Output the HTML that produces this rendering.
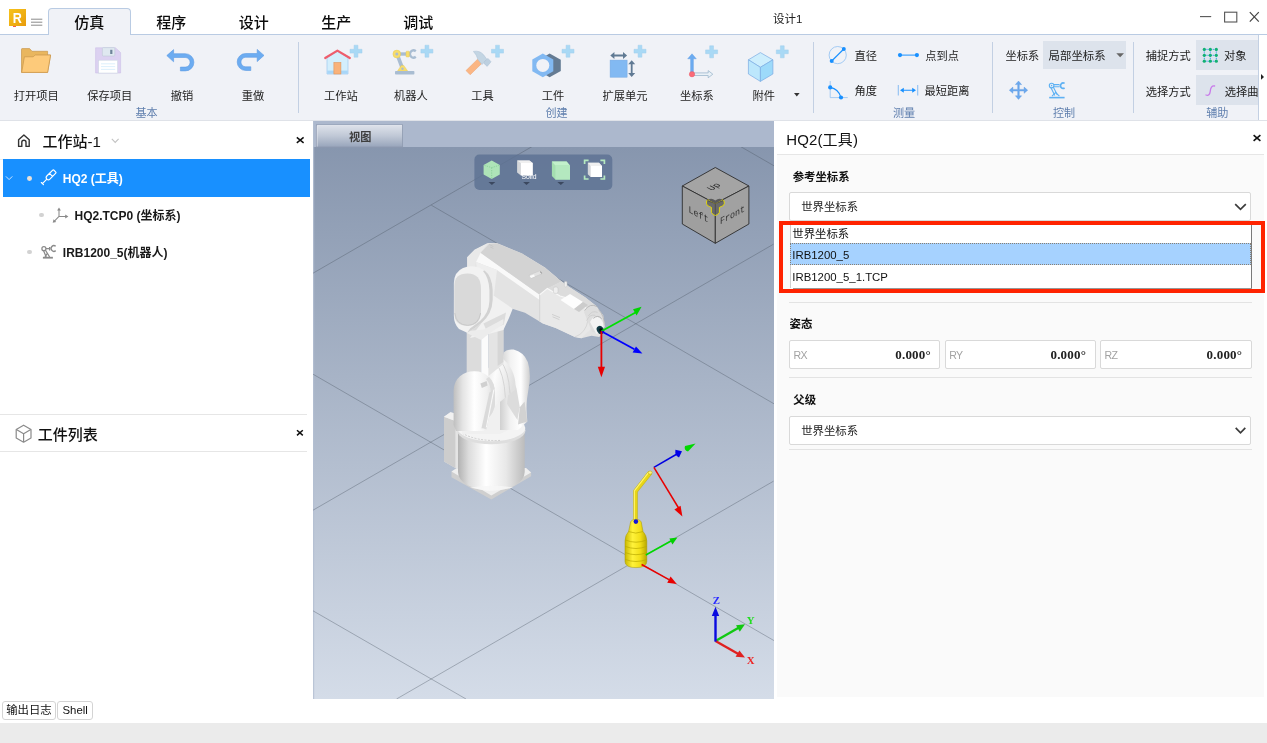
<!DOCTYPE html>
<html lang="zh-CN">
<head>
<meta charset="utf-8">
<title>设计1</title>
<style>
*{box-sizing:border-box;margin:0;padding:0}
html,body{width:1267px;height:743px;overflow:hidden;background:#fff}
body{font-family:"Liberation Sans","Noto Sans CJK SC",sans-serif;color:#222;position:relative;font-size:11.25px}
.abs{position:absolute}
svg{position:absolute;overflow:visible}
/* title + tabs */
#titlebar{position:absolute;left:0;top:0;width:1267px;height:34px;background:#fff}
#tabline{position:absolute;left:0;top:34px;width:1267px;height:1px;background:#b9cbe3}
.tab{position:absolute;top:8px;height:27px;width:82.5px;text-align:center;font-size:15px;line-height:30px;color:#0c0c0c;font-weight:500}
.tab.on{background:#f0f2f7;border:1px solid #b9cbe3;border-bottom:none;border-radius:4px 4px 0 0;line-height:28px}
#wtitle{position:absolute;left:773px;top:12px;font-size:11.5px;line-height:14px;color:#222}
/* ribbon */
#ribbon{position:absolute;left:0;top:35px;width:1258.5px;height:85px;background:#f0f2f7}
#ribline{position:absolute;left:0;top:120px;width:1267px;height:1px;background:#dfe2e8}
.sep{position:absolute;top:42px;width:1px;height:71px;background:#c3d0e3}
.blab{position:absolute;top:88px;height:16px;line-height:16px;font-size:11.25px;color:#222;white-space:nowrap;transform:translateX(-50%)}
.glab{position:absolute;top:105px;height:16px;line-height:16px;font-size:11.1px;color:#5f7fae;white-space:nowrap;transform:translateX(-50%)}
.stxt{position:absolute;height:16px;line-height:16px;font-size:11.25px;color:#222;white-space:nowrap}
.sbox{position:absolute;background:#dde3ec}
/* left */
#left{position:absolute;left:0;top:121px;width:310px;height:579px;background:#fff}
.row{position:absolute;left:3px;width:307px;height:37.6px}
.row.sel{background:#1890ff}
.rtxt{position:absolute;font-weight:bold;font-size:12px;line-height:16px;white-space:nowrap;color:#1a1a1a}
.dot{position:absolute;width:4.6px;height:4.6px;border-radius:50%;background:#d2d2d2}
.hl{position:absolute;height:1px;background:#e6e6e6}
/* right */
#right{position:absolute;left:777px;top:121px;width:487px;height:576px;background:#fafafa}
#rhead{position:absolute;left:0;top:0;width:487px;height:34px;background:#fff;border-bottom:1px solid #e6e6e6}
.slab{position:absolute;font-weight:bold;font-size:11.4px;line-height:16px;color:#111;white-space:nowrap}
.selbox{position:absolute;left:12.4px;width:462px;height:28.5px;background:#fff;border:1px solid #d9d9d9;border-radius:2px}
.selbox span{position:absolute;left:10.8px;top:6px;font-size:11.4px;line-height:16px;color:#222}
.nbox{position:absolute;top:219.2px;height:28.7px;width:151px;background:#fff;border:1px solid #d9d9d9;border-radius:2px}
.nbox i{position:absolute;left:3.2px;top:6px;font-style:normal;font-size:10.6px;line-height:16px;color:#a2a2a2;font-weight:normal;letter-spacing:-0.7px}
.nbox b{position:absolute;right:8.5px;top:5.5px;font-family:"Liberation Serif","DejaVu Serif",serif;font-size:13px;line-height:16px;color:#222;font-weight:bold;letter-spacing:0.2px}
.rsep{position:absolute;left:12px;width:463px;height:1px;background:#e3e3e3}
/* bottom */
.bbtn{position:absolute;top:700.9px;height:19px;border:1px solid #d4d4d4;border-radius:3px;background:#fff;font-size:11.4px;line-height:17px;text-align:center;color:#111}
#status{position:absolute;left:0;top:723px;width:1267px;height:20px;background:#ebebeb}
</style>
</head>
<body>
<div id="app" style="position:absolute;left:0;top:0;width:1267px;height:743px;will-change:transform;background:transparent">
<!-- TITLE / TABS -->
<div id="titlebar"></div>
<div id="tabline"></div>
<div id="ribbon"></div>
<div id="ribline"></div>
<div class="tab on" style="left:48px">仿真</div>
<div class="tab" style="left:130px">程序</div>
<div class="tab" style="left:212.5px">设计</div>
<div class="tab" style="left:295px">生产</div>
<div class="tab" style="left:377px">调试</div>
<div id="wtitle">设计1</div>
<div class="abs" style="left:9px;top:9px;width:17px;height:16.5px;background:linear-gradient(135deg,#f6c21c 0%,#efae12 60%,#e79a0c 100%);color:#fff;font-weight:bold;font-size:15px;line-height:17.4px;text-align:center;font-family:'Liberation Sans',sans-serif"><span style="display:inline-block;transform:scaleX(0.84)">R</span></div>
<div class="abs" style="left:13px;top:25.5px;width:3px;height:1.2px;background:#f05a5a"></div>
<svg style="left:30px;top:17px" width="14" height="10" viewBox="0 0 14 10"><path d="M1 2.2H12.3M1 5.2H12.3M1 8.2H12.3" stroke="#8a8a8a" stroke-width="1" fill="none"/></svg>
<svg style="left:1195px;top:8px" width="70" height="18" viewBox="0 0 70 18"><path d="M5 8.6H16.2" stroke="#555" stroke-width="1.1" fill="none"/><rect x="29.6" y="4.2" width="12.2" height="9.8" fill="none" stroke="#555" stroke-width="1.1"/><path d="M54.8 4.2L63.8 13.6M63.8 4.2L54.8 13.6" stroke="#444" stroke-width="1.2" fill="none"/></svg>
<div class="sep" style="left:298px"></div><div class="sep" style="left:813px"></div><div class="sep" style="left:992px"></div><div class="sep" style="left:1133px"></div>
<div class="abs" style="left:1258px;top:35px;width:1px;height:85px;background:#c3d0e3"></div>
<div class="sbox" style="left:1043.3px;top:41px;width:82.4px;height:27.7px"></div>
<div class="sbox" style="left:1195.7px;top:40.2px;width:62.6px;height:30.2px"></div>
<div class="sbox" style="left:1195.7px;top:75px;width:62.6px;height:30.4px"></div>
<div class="blab" style="left:36.2px">打开项目</div><div class="blab" style="left:109.7px">保存项目</div><div class="blab" style="left:182px">撤销</div><div class="blab" style="left:253.1px">重做</div>
<div class="blab" style="left:340.9px">工作站</div><div class="blab" style="left:411px">机器人</div><div class="blab" style="left:482.4px">工具</div><div class="blab" style="left:553px">工件</div><div class="blab" style="left:625px">扩展单元</div><div class="blab" style="left:697px">坐标系</div><div class="blab" style="left:763.8px">附件</div>
<div class="glab" style="left:146.5px">基本</div><div class="glab" style="left:556.6px">创建</div><div class="glab" style="left:904px">测量</div><div class="glab" style="left:1064px">控制</div><div class="glab" style="left:1217.3px">辅助</div>
<div class="stxt" style="left:854.5px;top:48.2px">直径</div><div class="stxt" style="left:925.2px;top:48.2px">点到点</div>
<div class="stxt" style="left:854.5px;top:82.8px">角度</div><div class="stxt" style="left:924.4px;top:82.8px">最短距离</div>
<div class="stxt" style="left:1005.5px;top:47.7px">坐标系</div><div class="stxt" style="left:1048.6px;top:47.7px;font-size:11.4px">局部坐标系</div>
<div class="stxt" style="left:1145.8px;top:48.2px">捕捉方式</div><div class="stxt" style="left:1223.9px;top:48.2px">对象</div>
<div class="stxt" style="left:1145.8px;top:84.1px">选择方式</div><div class="stxt" style="left:1224.8px;top:84.1px;width:33.5px;overflow:hidden">选择曲</div>
<svg style="left:0;top:0" width="1267" height="121" viewBox="0 0 1267 121">
<defs>
<g id="plus"><path d="M-1.9 -6H1.9V-1.9H6V1.9H1.9V6H-1.9V1.9H-6V-1.9H-1.9Z" fill="#a9d9f5" stroke="#a0cfec" stroke-width="0.5" stroke-linejoin="round"/></g>
</defs>
<!-- folder -->
<path d="M21.5 49.2Q21.5 48.6 22.1 48.6H29.6L32 51.3H47.6V55H50.6L47.6 72.4H21.5Z" fill="#e9b65e" stroke="#c9974c" stroke-width="0.7" stroke-linejoin="round"/>
<path d="M24.4 56.8H33.2L35.2 55H50.6L47.6 72.4H21.7Z" fill="#fdca7a" stroke="#c9974c" stroke-width="0.7" stroke-linejoin="round"/>
<!-- floppy -->
<path d="M95.6 47.8H115.4L120.6 52.6V73H95.6Z" fill="#dcd1f1" stroke="#cdbfe6" stroke-width="0.6" stroke-linejoin="round"/>
<rect x="102.4" y="47.6" width="12.4" height="8.4" rx="0.8" fill="#dfe8f0" stroke="#b9c6d3" stroke-width="0.5"/>
<rect x="110.2" y="49.8" width="2.2" height="4.2" fill="#6f8499"/>
<rect x="98.6" y="60.2" width="19" height="12.8" fill="#ffffff" stroke="#c8d4e0" stroke-width="0.5"/>
<path d="M101 63.8H115.2M101 66.6H115.2M101 69.4H115.2" stroke="#d3ebfa" stroke-width="0.8"/>
<!-- undo -->
<path d="M166.8 55.6L173.6 49.6V53.7H185.3A8.4 8.4 0 0 1 185.3 70.9H180.4V67.1H185.3A4.6 4.6 0 0 0 185.3 57.5H173.6V61.8Z" fill="#6cacf1" stroke="#5c9be3" stroke-width="0.6" stroke-linejoin="round"/>
<!-- redo -->
<path d="M264 55.4L257.2 49.4V53.5H245.7A8.4 8.4 0 0 0 245.7 70.5H250.8V66.8H245.7A4.6 4.6 0 0 1 245.7 57.3H257.2V61.6Z" fill="#6cacf1" stroke="#5c9be3" stroke-width="0.6" stroke-linejoin="round"/>
<!-- station (house) -->
<path d="M327 57.5L337.4 51.5L348 57.5V74H327Z" fill="#d3eefc" stroke="#9fc8ee" stroke-width="0.7"/>
<rect x="327.2" y="70.6" width="20.6" height="3.2" fill="#a8d6f8"/>
<rect x="333.9" y="62.6" width="7" height="11.4" fill="#f9b27a" stroke="#e09459" stroke-width="0.6"/>
<path d="M325.2 58L337.4 50.6L349.8 58" fill="none" stroke="#ee5d6c" stroke-width="2.2" stroke-linejoin="round" stroke-linecap="round"/>
<use href="#plus" x="356" y="51.2"/>
<!-- robot -->
<path d="M397 54L402.3 68" stroke="#a9bdd2" stroke-width="3.6" fill="none"/>
<path d="M397 54H408" stroke="#a9bdd2" stroke-width="3.4" fill="none"/>
<path d="M415.8 51.2A3.6 3.6 0 1 0 415.8 56.8" fill="none" stroke="#a9bdd2" stroke-width="2.4"/>
<rect x="406" y="51.2" width="3.4" height="5.8" rx="0.8" fill="#f7dd6b" stroke="#e3c454" stroke-width="0.4"/>
<circle cx="396.8" cy="54" r="3.9" fill="#f7dd6b" stroke="#e3c454" stroke-width="0.4"/>
<circle cx="396.8" cy="54" r="1.5" fill="#a9bdd2"/>
<path d="M397.4 71.2L401.2 65.4H403.8L407.8 71.2Z" fill="#f7dd6b" stroke="#e3c454" stroke-width="0.4"/>
<circle cx="402.5" cy="68.8" r="1.2" fill="#a9bdd2"/>
<rect x="395" y="71" width="19.4" height="3.6" rx="0.8" fill="#a9bdd2"/>
<use href="#plus" x="426.9" y="51.2"/>
<!-- hammer -->
<path d="M466 70.6L477.6 59.2L481.8 63.4L470.2 74.8Z" fill="#fbb684" stroke="#eaa06c" stroke-width="0.5" stroke-linejoin="round"/>
<path d="M473.4 51.4Q479.6 50.2 483.4 54.6L487 59.4L482 64.6L478 59.6Q476.6 54.6 473.4 51.4Z" fill="#c3d5e3" stroke="#a9bfd2" stroke-width="0.5" stroke-linejoin="round"/>
<path d="M484.6 61.4L488 58.4L491 61.8L487.2 66.4L484 63.4Z" fill="#bdd0e0" stroke="#a9bfd2" stroke-width="0.5" stroke-linejoin="round"/>
<use href="#plus" x="497.5" y="51.2"/>
<!-- workpiece nut -->
<path d="M549.6 53.5L560.8 59.7V71.1L549.6 77.3L539 71.1V59.7Z" fill="#647b93"/>
<path d="M542.8 53.4L553.3 59.5V71.2L542.8 77.3L532.3 71.2V59.5Z" fill="#82b9f2"/>
<circle cx="542.8" cy="65.4" r="6.5" fill="#f0f2f7"/>
<use href="#plus" x="568" y="51.2"/>
<!-- extension unit -->
<rect x="610.1" y="60.1" width="17" height="17.1" fill="#82b9f2" stroke="#74a9e2" stroke-width="0.5"/>
<path d="M610.3 55.5L614.4 51.9V54.6H623V51.9L627.1 55.5L623 59.1V56.4H614.4V59.1Z" fill="#607a94"/>
<path d="M631.7 60.2L635.2 64.2H632.6V73H635.2L631.7 77.1L628.2 73H630.8V64.2H628.2Z" fill="#607a94"/>
<use href="#plus" x="640" y="51.2"/>
<!-- coordinate -->
<path d="M694 72.9H708.2V70.6L712.8 74.2L708.2 77.8V75.5H694Z" fill="#e9f1f7" stroke="#9db8cd" stroke-width="0.8" stroke-linejoin="round"/>
<path d="M692 53.8L696.3 58.8H693.4V73.5H690.6V58.8H687.7Z" fill="#6cacf1" stroke="#5c9be3" stroke-width="0.4" stroke-linejoin="round"/>
<circle cx="692" cy="74.2" r="2.7" fill="#fb6b78" stroke="#e85563" stroke-width="0.4"/>
<use href="#plus" x="711.6" y="51.8"/>
<!-- attachment cube -->
<path d="M760.4 52.6L772.9 59.8L760.4 67.3L748.4 59.8Z" fill="#cdeefd" stroke="#7baae2" stroke-width="0.7" stroke-linejoin="round"/>
<path d="M748.4 59.8L760.4 67.3V81.4L748.4 74Z" fill="#bce7fc" stroke="#7baae2" stroke-width="0.7" stroke-linejoin="round"/>
<path d="M772.9 59.8L760.4 67.3V81.4L772.9 74Z" fill="#9ddafa" stroke="#7baae2" stroke-width="0.7" stroke-linejoin="round"/>
<use href="#plus" x="782.3" y="51.8"/>
<path d="M794 93H799.6L796.8 96.4Z" fill="#333"/>
<!-- measure icons -->
<circle cx="837.7" cy="55.1" r="8.6" fill="none" stroke="#8fc0f3" stroke-width="0.8"/>
<path d="M831.7 61L843.8 49" stroke="#1890ff" stroke-width="1.1"/>
<circle cx="843.8" cy="49" r="2" fill="#1890ff"/><circle cx="831.7" cy="61" r="2" fill="#1890ff"/>
<path d="M830.2 81V97.6H847.7" fill="none" stroke="#8fc0f3" stroke-width="0.8"/>
<path d="M830.2 87.4Q838.6 89 841 97.5" fill="none" stroke="#1890ff" stroke-width="1.1"/>
<circle cx="830.2" cy="87.4" r="2.1" fill="#1890ff"/><circle cx="841" cy="97.5" r="2.1" fill="#1890ff"/>
<path d="M900 55.1H917" stroke="#1890ff" stroke-width="1"/>
<circle cx="900" cy="55.1" r="2.1" fill="#1890ff"/><circle cx="916.9" cy="55.1" r="2.1" fill="#1890ff"/>
<path d="M898.3 85V95.6M917.7 85V95.6" stroke="#8fc0f3" stroke-width="1.1"/>
<path d="M900 90.3L903.8 87.8V89.8H912.2V87.8L916 90.3L912.2 92.8V90.8H903.8V92.8Z" fill="#1890ff"/>
<!-- move icon -->
<path d="M1018.5 81L1021.6 84.6H1019.3V89.4H1024.1V87.1L1027.7 90.2L1024.1 93.3V91H1019.3V95.8H1021.6L1018.5 99.4L1015.4 95.8H1017.7V91H1012.9V93.3L1009.3 90.2L1012.9 87.1V89.4H1017.7V84.6H1015.4Z" fill="#6aa8ee" stroke="#5a98e0" stroke-width="0.4" stroke-linejoin="round"/>
<!-- small robot -->
<g fill="none" stroke="#5eb1f3" stroke-width="1.1">
<circle cx="1051.6" cy="85.6" r="2.3"/>
<path d="M1053.9 84.6H1059.5M1053.9 86.8H1059.5"/>
<path d="M1064.6 83.4A2.7 2.7 0 1 0 1064.6 88" stroke-width="1.7"/>
<path d="M1051 87.8L1054.8 95.6M1053.4 87.2L1057.4 95"/>
<path d="M1052 96.2L1055.6 92.6L1059.4 96.2"/>
<path d="M1049.2 97.6H1064.6" stroke-width="1.6"/>
</g>
<circle cx="1051.6" cy="85.6" r="0.8" fill="#5eb1f3"/>
<!-- dropdown triangle -->
<path d="M1116.3 53.2H1124L1120.15 57.3Z" fill="#666"/>
<!-- grid dots icon -->
<g stroke="#2f9cf2" stroke-width="1" stroke-dasharray="1.2 0.9" fill="none"><path d="M1204.3 49.4H1216.3M1204.3 55.3H1216.3M1204.3 61.2H1216.3M1204.3 49.4V61.2M1210.3 49.4V61.2M1216.3 49.4V61.2"/></g>
<g fill="#12b173"><circle cx="1204.3" cy="49.4" r="1.6"/><circle cx="1210.3" cy="49.4" r="1.6"/><circle cx="1216.3" cy="49.4" r="1.6"/><circle cx="1204.3" cy="55.3" r="1.6"/><circle cx="1210.3" cy="55.3" r="1.6"/><circle cx="1216.3" cy="55.3" r="1.6"/><circle cx="1204.3" cy="61.2" r="1.6"/><circle cx="1210.3" cy="61.2" r="1.6"/><circle cx="1216.3" cy="61.2" r="1.6"/></g>
<!-- S curve -->
<path d="M1206 95Q1209.6 96.4 1210.2 91.6Q1210.6 85.4 1214.6 86" fill="none" stroke="#c97aea" stroke-width="1.3" stroke-linecap="round"/>
<!-- scroll arrow -->
<path d="M1261 74L1264 76.9L1261 79.8Z" fill="#222"/>
</svg>

<div id="left">
<div class="abs" style="left:42.6px;top:10px;font-size:15px;line-height:21px;color:#111;white-space:nowrap;font-weight:500">工作站-1</div>
<div class="hl" style="left:0;top:38px;width:310px;background:#ededed"></div>
<div class="row sel" style="top:38.4px"></div>
<div class="rtxt" style="left:62.8px;top:49.5px;color:#fff">HQ2 (工具)</div>
<div class="dot" style="left:27.4px;top:54.8px;width:4.8px;height:4.8px;background:#e9e0d8"></div>
<div class="rtxt" style="left:74.5px;top:86.8px">HQ2.TCP0 (坐标系)</div>
<div class="dot" style="left:39.1px;top:91.6px"></div>
<div class="rtxt" style="left:62.8px;top:124px">IRB1200_5(机器人)</div>
<div class="dot" style="left:27.4px;top:128.8px"></div>
<div class="hl" style="left:0;top:293.4px;width:307.3px"></div>
<div class="hl" style="left:0;top:330.3px;width:307.3px"></div>
<div class="abs" style="left:37.8px;top:302.6px;font-size:15px;line-height:21px;color:#111;white-space:nowrap;font-weight:500">工件列表</div>
<svg style="left:0;top:0" width="310" height="579" viewBox="0 121 310 579">
<!-- home -->
<path d="M18.6 139.8L23.9 135L29.2 139.8V146.4H26V142.2Q26 140.2 23.9 140.2Q21.8 140.2 21.8 142.2V146.4H18.6Z" fill="none" stroke="#333" stroke-width="1.4" stroke-linejoin="round"/>
<path d="M111.8 138.9L115.2 142.4L118.6 138.9" fill="none" stroke="#c2c2c2" stroke-width="1.1"/>
<path d="M296.8 137.4L303.6 142.8M303.6 137.4L296.8 142.8" stroke="#111" stroke-width="1.5"/>
<!-- row1 chevron + tool icon -->
<path d="M5.9 176.4L9.1 179.6L12.3 176.4" fill="none" stroke="#cfe6ff" stroke-width="1"/>
<g fill="none" stroke="#fff" stroke-width="1.15" stroke-linecap="round" stroke-linejoin="round" transform="translate(50.75 175.1) rotate(-45.4)">
<path d="M-3.4 -2.15H5Q5.7 -2.15 5.7 -1.5V1.5Q5.7 2.15 5 2.15H-3.4A2.15 2.15 0 0 1 -3.4 -2.15ZM0.4 -2.15V2.15M-5.55 0H-11.9M-11.9 -1.5V1.5"/>
</g>
<!-- row2 axis icon -->
<g fill="none" stroke="#8a8a8a" stroke-width="1.05">
<path d="M59 209.4V216.4H66.4M59 216.4L54.2 221.3"/>
</g>
<path d="M59 207.4L60.9 210.6H57.1ZM68.4 216.5L65.2 218.4V214.6ZM52.7 222.8L53.6 219.3L56.2 221.9Z" fill="#8a8a8a"/>
<!-- row3 robot icon -->
<g fill="none" stroke="#8a8a8a" stroke-width="1.25">
<circle cx="43.9" cy="248.7" r="2"/>
<path d="M46 248.7H49.4M49.6 247V250.4"/>
<path d="M55.7 246.3A2.8 2.8 0 1 0 55.7 250.6" stroke-width="1.4"/>
<path d="M43.6 250.8L46.2 257M45.5 250.2L49.6 257"/>
<path d="M45 256.8L47.2 253.6"/>
<path d="M42.9 257.7H52.9" stroke-width="1.8"/>
</g>
<!-- cube icon -->
<g fill="none" stroke="#8a8a8a" stroke-width="1.2" stroke-linejoin="round">
<path d="M23.6 425.2L31 429.4V438L23.6 442.2L16.2 438V429.4Z"/>
<path d="M16.4 429.6L23.6 433.7L30.8 429.6M23.6 433.7V442"/>
</g>
<path d="M297 430.2L302.8 435.4M302.8 430.2L297 435.4" stroke="#111" stroke-width="1.5"/>
</svg>
</div>
<div class="abs" style="left:313px;top:121px;width:461px;height:578px;background:#acb8cd"></div>
<svg style="left:313px;top:121px" width="461" height="578" viewBox="313 121 461 578">
<defs>
<linearGradient id="bg" x1="0" y1="0" x2="0" y2="1"><stop offset="0" stop-color="#8796ae"/><stop offset="1" stop-color="#d4dce8"/></linearGradient>
<linearGradient id="tabg" x1="0" y1="0" x2="0" y2="1"><stop offset="0" stop-color="#dfe3eb"/><stop offset="0.5" stop-color="#c0c8d6"/><stop offset="1" stop-color="#98a5bb"/></linearGradient>
<linearGradient id="cyl" x1="0" y1="0" x2="1" y2="0"><stop offset="0" stop-color="#b2b2b2"/><stop offset="0.16" stop-color="#dcdcdc"/><stop offset="0.42" stop-color="#ffffff"/><stop offset="0.72" stop-color="#e8e8e8"/><stop offset="1" stop-color="#bcbcbc"/></linearGradient>
<linearGradient id="lobeR" x1="0" y1="0" x2="1" y2="0"><stop offset="0" stop-color="#d0d0d0"/><stop offset="0.35" stop-color="#f2f2f2"/><stop offset="0.7" stop-color="#ffffff"/><stop offset="1" stop-color="#cfcfcf"/></linearGradient>
<linearGradient id="lobeL" x1="0" y1="0" x2="1" y2="0"><stop offset="0" stop-color="#bfbfbf"/><stop offset="0.22" stop-color="#e4e4e4"/><stop offset="0.5" stop-color="#ffffff"/><stop offset="0.8" stop-color="#f0f0f0"/><stop offset="1" stop-color="#dcdcdc"/></linearGradient>
<linearGradient id="midc" x1="0" y1="0" x2="1" y2="0.3"><stop offset="0" stop-color="#e2e2e2"/><stop offset="0.4" stop-color="#fcfcfc"/><stop offset="1" stop-color="#e0e0e0"/></linearGradient>
<linearGradient id="lobe" x1="0" y1="0" x2="1" y2="0"><stop offset="0" stop-color="#cfcfcf"/><stop offset="0.3" stop-color="#f4f4f4"/><stop offset="0.7" stop-color="#ffffff"/><stop offset="1" stop-color="#dcdcdc"/></linearGradient>
<linearGradient id="arm" x1="0" y1="0" x2="0.5" y2="1"><stop offset="0" stop-color="#dedede"/><stop offset="0.45" stop-color="#f7f7f7"/><stop offset="1" stop-color="#e6e6e6"/></linearGradient>
<linearGradient id="ycyl" x1="0" y1="0" x2="1" y2="0"><stop offset="0" stop-color="#c9b800"/><stop offset="0.35" stop-color="#fff23a"/><stop offset="0.7" stop-color="#f2df18"/><stop offset="1" stop-color="#b8a800"/></linearGradient>
<clipPath id="vpclip"><rect x="313" y="147" width="461" height="552"/></clipPath>
</defs>
<rect x="313" y="147" width="461" height="552" fill="url(#bg)"/>
<rect x="313" y="121" width="1.2" height="578" fill="#b4bfd2" opacity="0.8"/>
<!-- header tab -->
<rect x="316.5" y="124.8" width="86.1" height="22.2" fill="url(#tabg)" stroke="#8e9ab0" stroke-width="0.8"/>
<path d="M317.2 146.6V125.5H402" fill="none" stroke="#eef1f6" stroke-width="0.7" opacity="0.8"/>
<text x="360.3" y="140.6" text-anchor="middle" font-size="11.2" font-weight="bold" fill="#3e3e3e" font-family="'Liberation Sans','Noto Sans CJK SC',sans-serif">视图</text>
<!-- grid -->
<g clip-path="url(#vpclip)" stroke="#4a5463" stroke-opacity="0.5" stroke-width="0.75" fill="none">
<path d="M313 273.2L532 146.6"/>
<path d="M313 510.2L773.5 244.2"/>
<path d="M396.5 699L773.5 481.2"/>
<path d="M741 146.8L774 165.8"/>
<path d="M431.3 205.2L774 403.8"/>
<path d="M313 374.2L774 640.6"/>
<path d="M313 610.8L466 699"/>
</g>
<g id="robot" stroke-linejoin="round">
<!-- base plate -->
<path d="M451.5 471.4L457 468H526L531.1 472.4V476.2L491.3 499.4L451.5 477.2Z" fill="#cfcfcf"/>
<path d="M451.5 471.6L491.3 495.4L531.1 472.6L526 468H457Z" fill="#efefef"/>
<!-- back box -->
<path d="M444 416.8L450.4 412.2L461 415V470L455.4 468L444 461.6Z" fill="#e4e4e4"/>
<path d="M444 416.8L455.4 421V468L444 461.6Z" fill="#cdcdcd"/>
<path d="M444 416.8L450.4 412.2L461 415L455.4 421Z" fill="#f1f1f1"/>
<!-- base cylinder -->
<path d="M458 431V472A33.35 18.7 0 0 0 524.7 472V431Z" fill="url(#cyl)"/>
<path d="M470 487.6Q491.3 493.4 513 487.4Q491.3 484 470 487.6Z" fill="#f6f6f6" opacity="0.8"/>
<!-- top flange -->
<ellipse cx="491.3" cy="430.6" rx="34.2" ry="13.6" fill="#dedede"/>
<ellipse cx="491.3" cy="428" rx="34" ry="13.2" fill="#f4f4f4"/>
<path d="M462 433Q476 441.4 500 440.4" fill="none" stroke="#c9c9c9" stroke-width="0.9" stroke-dasharray="2 1.4"/>
<!-- fill behind lobes -->
<path d="M462 400L500 372L522 380L527 421L500 434H462Z" fill="#f0f0f0"/>
<!-- right lobe -->
<path d="M503.6 352.6Q507 348.8 513.6 349.6Q523.6 352 527.8 362Q530.6 370 529.6 382L527 399Q526 410 527.4 421.4L518 430H500V372Z" fill="url(#lobeR)"/>
<path d="M510 371L516.4 388L519.8 407.2L517.4 420L507 404Z" fill="#dcdcdc"/>
<path d="M519.8 407.2L524.6 401.4L527.2 421.4L518 424.6Z" fill="#d2d2d2"/>
<!-- middle cylinder -->
<path d="M485 370L503 359Q512 366.4 514.6 378Q516 384 515.4 389.5L494.9 406Z" fill="url(#midc)"/>
<path d="M496 363.4Q504 373 505.4 397.6M500.4 360.8Q508.6 370 510 393.6" fill="none" stroke="#d2d2d2" stroke-width="0.9"/>
<!-- vertical link -->
<path d="M466.7 322V378L481.2 382V322Z" fill="#dcdcdc"/>
<path d="M481.2 322V380L488.5 378V322Z" fill="#fbfbfb"/>
<path d="M488.5 322V376L503.4 364V318L497 320Z" fill="#e4e4e4"/>
<path d="M497.6 322V366L503.4 362V318Z" fill="#d6d6d6"/>
<!-- left lobe -->
<path d="M453.6 390Q454.2 381 460 376.2Q466 371.2 474 371.2Q483 371 489 377Q494.6 382.6 494.8 392L495 404Q494 412 488.5 418L484 431H456L453.6 425Z" fill="url(#lobeL)"/>
<path d="M486 379Q490.6 384 491 393V404Q490 411 486 416L482 428L486.4 429.6L488.5 418Q494 412 495 404L494.8 392Q494.6 382.6 489 377Z" fill="#dddddd"/>
<path d="M480.4 383.6L486.6 381L487.6 385.4L481.8 388Z" fill="#d0d0d0"/>
<!-- strut -->
<path d="M489.4 392.6L494.6 389L487 427L481.4 428.6Z" fill="#dadada"/>
<path d="M493.2 390L494.6 389L487 427L485.8 427.4Z" fill="#f8f8f8"/>
<!-- bracket under forearm -->
<path d="M482 322.4L490 292L513.4 307L509 318L503.4 330L488.5 334L470 338Z" fill="#f1f1f1"/>
<path d="M483.4 323.4L506 312.6L503.9 324.5L486.6 330.6Z" fill="#dcdcdc"/>
<path d="M466.7 333L481.2 340L488.5 334L503.4 324V319L484 329.4L468 331Z" fill="#ececec"/>
<!-- forearm silhouette (side face) -->
<path d="M467.2 257.2L474.6 249.8L488 243.1H496.9L522 253.5L545 267.6L561.4 281.3L568.5 286.4L585.1 297.3L596.6 306.3L603 315.2L604.9 325.4L602.6 333L599.2 337L591.5 335.7L581.3 338.2L574.9 337L555.7 328L542.9 323.5L525 312.7L513.1 309L493.9 295.7L489 290L467.2 268Z" fill="#e3e3e3"/>
<!-- shoulder block left faces -->
<path d="M467.2 257.2L474.6 249.8L488 243.1L480.6 252.8L476 262L474 274L467.2 268Z" fill="#e9e9e9"/>
<path d="M476 262L480.6 252.8L539.7 294.8V300L497 270Z" fill="#f9f9f9"/>
<path d="M476 262L497 270L493.9 295.7L489 290L478 279Z" fill="#eeeeee"/>
<!-- top face -->
<path d="M480.6 252.8L489 244L496.9 243.2L522 253.6L545 267.8L561.4 281.4L547.4 288.4L539.7 294.8Z" fill="#d3d3d3"/>
<path d="M489.4 244.6L493.4 246.6M490.2 247L493.4 248.4" stroke="#bdbdbd" stroke-width="0.6"/>
<!-- segment 2 -->
<path d="M539.7 294.8L547.4 288.4L560 296L574 300L590 311L596 320L590 330L581.3 338.2L574.9 337L555.7 328L542.9 323.5L539.7 321.6Z" fill="#e8e8e8"/>
<path d="M547.4 288.4L561.4 281.4L568.5 286.4L585.1 297.3L596.6 306.3L590 311L574 300L560 296Z" fill="#dcdcdc"/>
<path d="M539.7 294.8L547.4 288.4L560 296L574 300L590 311" fill="none" stroke="#f8f8f8" stroke-width="1.2"/>
<path d="M539.7 294.8V321.6" stroke="#cfcfcf" stroke-width="0.8" fill="none"/>
<path d="M574.9 337Q586 333 588 320Q588.6 314 586 309" fill="none" stroke="#d2d2d2" stroke-width="0.8"/>
<!-- white cover -->
<path d="M560.5 300L570 294L583 302L574 309Z" fill="#fdfdfd"/>
<path d="M574 309L583 302L588 305L579 312Z" fill="#cccccc"/>
<!-- connectors -->
<rect x="553.4" y="287" width="4.6" height="6.4" rx="1.6" fill="#efefef" stroke="#c4c4c4" stroke-width="0.5"/>
<rect x="564.4" y="281.4" width="2.6" height="5.6" rx="1.2" fill="#efefef" stroke="#c4c4c4" stroke-width="0.5"/>
<path d="M529 275L540.4 270.6L542.6 273.6L531 278.4Z" fill="#e2e2e2" stroke="#c4c4c4" stroke-width="0.5"/>
<path d="M529.6 276L534 274.4L534.8 276.4L531 278Z" fill="#fafafa"/>
<path d="M540 271.6L542 273.4" stroke="#777" stroke-width="0.8"/>
<!-- wrist -->
<path d="M584 312Q588 303 596 306.5L603 315.2L604.9 325.4L600 334L592 332Z" fill="#dedede"/>
<path d="M590 322Q594 314 600 318L604 324L602 331L596.5 334Z" fill="#f4f4f4"/>
<path d="M588.4 316Q592 310 597.6 312.4M586.6 320.6Q590 313.6 595.4 315.4" fill="none" stroke="#c8c8c8" stroke-width="0.7"/>
<ellipse cx="600.4" cy="330" rx="3.4" ry="4.4" transform="rotate(-30 600.4 330)" fill="#123a44"/>
<ellipse cx="601.2" cy="330.6" rx="1.7" ry="2.4" transform="rotate(-30 601.2 330.6)" fill="#0a0a0a"/>
<path d="M584.6 310.6Q590 302.4 597.4 306.8M598.6 309.6Q604.6 316 604.2 325.6" fill="none" stroke="#b4b4b4" stroke-width="0.8"/>
<path d="M593.4 318.4Q597.6 314.4 601.6 318.6" fill="none" stroke="#a8a8a8" stroke-width="0.8"/>
<!-- ABB hint -->
<path d="M552 314.4L560 317.6M552.6 316.8L559.4 319.6" stroke="#d0d0d0" stroke-width="1" fill="none"/>
<!-- elbow capsule -->
<path d="M453.9 283Q454 272 463 268Q472 264.4 481 268.6Q492 274 492.7 290V300Q492 314 482 322.4Q474 329 467.2 332.8L459 329Q453.9 324 453.9 316Z" fill="#f2f2f2"/>
<path d="M483 271Q489 278 489.4 290V301Q489 313 480 321L470 328.6L467.2 332.8Q474 329 482 322.4Q492 314 492.7 300V290Q492 276 484.6 270.4Z" fill="#d2d2d2"/>
<path d="M454.3 286Q454.3 273.6 467.6 273.6Q481 273.6 481 289V311Q481 325.8 467.6 325.8Q454.3 325.8 454.3 313Z" fill="#d9d9d9"/>
<path d="M454.8 313Q456 324.8 467.6 325.4Q478.6 325 480.6 313" fill="none" stroke="#c9c9c9" stroke-width="1"/>
</g>

<!--ROBOTEND-->
<g id="tool">
<!-- yellow tool neck -->
<path d="M633.6 522V490.4L648.2 471.6L651.6 474.2L637.4 492V522Z" fill="#e8d618" stroke="#b8a800" stroke-width="0.5"/>
<path d="M634.4 521V490.8L648.6 472.4" fill="none" stroke="#fff46a" stroke-width="1.1"/>
<ellipse cx="650.2" cy="472.6" rx="2" ry="1.6" fill="#fff27a" stroke="#b8a800" stroke-width="0.5"/>
<!-- body -->
<path d="M630.2 524Q630.2 519.4 635.8 519.4Q641.6 519.4 641.6 524L643 531.4Q646.6 535 646.8 541V561.6Q646.8 567.6 636 567.6Q625 567.6 625 561.6V541Q625.2 535 628.6 531.4Z" fill="url(#ycyl)" stroke="#a89a00" stroke-width="0.5"/>
<path d="M628.6 531.6Q635.8 534.6 643 531.6M625.4 540Q636 544.4 646.6 540M625.2 546.4Q636 550.6 646.8 546.4M625.2 552.6Q636 556.8 646.8 552.6M625.2 559.4Q636 563.6 646.8 559.4" fill="none" stroke="#b9a900" stroke-width="0.7"/>
<circle cx="635.9" cy="521.6" r="2.3" fill="#1414d8"/>
</g>

<g id="axes" stroke-linecap="butt">
<!-- robot TCP frame -->
<path d="M601.4 331.2L636 312.2" stroke="#00e000" stroke-width="1.8"/>
<path d="M641.6 306.8L633 309.2L636.6 315.6Z" fill="#00d400"/>
<path d="M601.4 331.2L634.4 349.2" stroke="#0000ff" stroke-width="1.8"/>
<path d="M642.4 353.6L632.6 352.6L636 346.4Z" fill="#0000ff"/>
<path d="M601.4 331.2V367.6" stroke="#e80000" stroke-width="1.8"/>
<path d="M601.4 377.2L597.8 366.8H605Z" fill="#e80000"/>
<!-- tool TCP frame -->
<path d="M653.9 467.4L677 454" stroke="#0000e0" stroke-width="1.5"/>
<path d="M675.4 449.8L682 451.2L679 457.4Q674.6 456 675.4 449.8Z" fill="#0000e8"/>
<path d="M685 446L695.6 443.4L688 451.6Q683.6 450 685 446Z" fill="#00d800"/>
<path d="M653.9 467.4L678.6 508" stroke="#e80000" stroke-width="1.5"/>
<path d="M682.4 516.6L674.4 509.6L680.6 505.8Z" fill="#e80000"/>
<!-- tool base frame -->
<path d="M645.8 555L671 541" stroke="#00d800" stroke-width="1.5"/>
<path d="M677.4 537.4L669.4 538.4L672.4 544.4Z" fill="#00d000"/>
<path d="M641.6 564.5L669 579.6" stroke="#e80000" stroke-width="1.5"/>
<path d="M676.8 584L667.2 582.8L670.6 576.6Z" fill="#e80000"/>
<!-- triad -->
<path d="M715.5 641L738.6 627.8" stroke="#12c812" stroke-width="2.4"/>
<path d="M745 624.2L736 625.2L739.8 631.8Z" fill="#12c812"/>
<path d="M715.5 641L738.4 654" stroke="#e02020" stroke-width="2.4"/>
<path d="M745 657.6L735.6 656.8L739.4 650.4Z" fill="#e02020"/>
<path d="M715.5 641.6V614.6" stroke="#0a0ae0" stroke-width="2.4"/>
<path d="M715.5 606.8L719.2 616H711.8Z" fill="#0a0ae0"/>
<g font-family="'Liberation Serif','DejaVu Serif',serif" font-size="10.8" font-weight="bold" text-anchor="middle">
<text x="716.4" y="604.4" fill="#2a2aff">Z</text>
<text x="750.6" y="624.4" fill="#22dd22">Y</text>
<text x="750.6" y="664.2" fill="#ee2222">X</text>
</g>
</g>

<g id="vtoolbar">
<rect x="474.4" y="154.6" width="137.9" height="35.3" rx="5" fill="#5d7192" fill-opacity="0.82"/>
<!-- icon1 green hex cube -->
<path d="M491.7 160.4L499.8 165V174.4L491.7 179L483.6 174.4V165Z" fill="#aee4b8"/>
<path d="M484.4 165.4L491.7 167.6L499 165.4M491.7 167.6V178.4" fill="none" stroke="#7fc892" stroke-width="0.7" stroke-dasharray="1.3 1.1"/>
<path d="M488.5 181.9H495.3L491.9 185Z" fill="#3b485f"/>
<!-- icon2 white cube + Solid -->
<path d="M517.1 160.4H529.4L532.7 163V175.4H520.9L517.1 172.4Z" fill="#d4d6da"/>
<path d="M517.1 160.4H529.4L532.7 163H520.9Z" fill="#f0f0f0"/>
<rect x="520.9" y="163" width="11.8" height="12.4" fill="#ffffff"/>
<text x="529" y="178.8" text-anchor="middle" font-size="6.8" fill="#ffffff" font-family="'Liberation Sans',sans-serif">Solid</text>
<path d="M523.1 181.9H529.9L526.5 185Z" fill="#3b485f"/>
<!-- icon3 green cube -->
<path d="M551.9 161.5H566.6L570 165.4V179.6H555.4L551.9 176Z" fill="#a4dfb0"/>
<path d="M551.9 161.5H566.6L570 165.4H555.4Z" fill="#c2f0cb"/>
<rect x="555.4" y="165.4" width="14.6" height="14.2" fill="#b4e8bf"/>
<path d="M557.4 181.9H564.2L560.8 185Z" fill="#3b485f"/>
<!-- icon4 brackets cube -->
<path d="M584.6 164V160.3H588.6M600.4 160.3H604.4V164M604.4 175.4V179H600.4M588.6 179H584.6V175.4" fill="none" stroke="#b4e8bf" stroke-width="1.7"/>
<path d="M587.8 162.8H599L602 166V177H590.7L587.8 174.2Z" fill="#d4d6da"/>
<path d="M587.8 162.8H599L602 166H590.7Z" fill="#f0f0f0"/>
<rect x="590.7" y="166" width="11.3" height="11" fill="#ffffff"/>
</g>

<g id="vcube" stroke-linejoin="round">
<path d="M715.3 167.5L748.9 186L715.3 203.6L682.3 186Z" fill="#a4a4a4" stroke="#2c2c2c" stroke-width="0.9"/>
<path d="M682.3 186L715.3 203.6V243.3L682.3 224Z" fill="#9f9f9f" stroke="#2c2c2c" stroke-width="0.9"/>
<path d="M748.9 186L715.3 203.6V243.3L748.9 224Z" fill="#a1a1a1" stroke="#2c2c2c" stroke-width="0.9"/>
<g font-family="'Liberation Mono','DejaVu Sans Mono',monospace" font-size="9.6" fill="#2e2e2e" text-anchor="middle">
<text transform="matrix(0.87 -0.46 0.87 0.46 716.6 188)" x="0" y="0">Up</text>
<text transform="matrix(0.87 0.47 0 1 698.6 217.4)" x="0" y="0">Left</text>
<text transform="matrix(0.87 -0.47 0 1 732.6 217.8)" x="0" y="0">Front</text>
</g>
<path d="M715.3 203.6L708.2 199.8Q706 200 706.4 203.2Q706.6 206 709.6 206.6L711.4 207.4V212.4Q713 215.2 715.3 215.4Q717.8 215.2 719.4 212.4V207.4L721.2 206.6Q724.2 206 724.4 203.2Q724.6 200 722.4 199.8Z" fill="#6a6a6a" stroke="#ece000" stroke-width="0.9"/>
<path d="M715.3 203.6L707.4 200.6M715.3 203.6L723.2 200.6M715.3 203.6V215" stroke="#444" stroke-width="0.7" fill="none"/>
<path d="M708.2 199.8L715.3 203.6L722.4 199.8Q719 197.6 715.3 200.6Q711.6 197.6 708.2 199.8Z" fill="#5a5a5a"/>
</g>

</svg>

<div id="right">
<div id="rhead"></div>
<div class="abs" style="left:9.2px;top:8px;font-size:15px;line-height:21px;color:#111;white-space:nowrap;letter-spacing:0.15px">HQ2(工具)</div>
<div class="slab" style="left:15.7px;top:47.8px">参考坐标系</div>
<div class="selbox" style="top:71.4px"><span>世界坐标系</span></div>
<div class="rsep" style="top:180.9px"></div>
<div class="slab" style="left:12.6px;top:195px">姿态</div>
<div class="nbox" style="left:12.4px"><i>RX</i><b>0.000°</b></div>
<div class="nbox" style="left:168.1px;width:150.5px"><i>RY</i><b>0.000°</b></div>
<div class="nbox" style="left:323.3px;width:151.4px"><i>RZ</i><b>0.000°</b></div>
<div class="rsep" style="top:255.6px"></div>
<div class="slab" style="left:16.3px;top:270.8px">父级</div>
<div class="selbox" style="top:295.2px;height:28.8px"><span>世界坐标系</span></div>
<div class="rsep" style="top:328px"></div>
<!-- dropdown list -->
<div class="abs" style="left:15.6px;top:105.5px;width:459.6px;height:63.3px;background:#979797"></div>
<div class="abs" style="left:12.7px;top:104px;width:462.3px;height:63px;background:#fff;border-left:1px solid #d0d0d0;border-right:1.5px solid #7a7a7a"></div>
<div class="abs" style="left:13.4px;top:122.4px;width:460.6px;height:21.2px;background:#a6d2ff;border:1px dotted #8a7f72"></div>
<div class="abs" style="left:15.3px;top:104.5px;font-size:11.4px;line-height:16px;color:#111;white-space:nowrap">世界坐标系</div>
<div class="abs" style="left:15.3px;top:126.3px;font-size:11.4px;line-height:16px;color:#111;white-space:nowrap">IRB1200_5</div>
<div class="abs" style="left:15.3px;top:148px;font-size:11.4px;line-height:16px;color:#111;white-space:nowrap">IRB1200_5_1.TCP</div>
<!-- red highlight box -->
<div class="abs" style="left:2.2px;top:99.8px;width:486.2px;height:72.7px;border:4.1px solid #ff2300"></div>
<svg style="left:0;top:0" width="487" height="576" viewBox="777 121 487 576">
<path d="M1253.6 135.2L1260.4 140.8M1260.4 135.2L1253.6 140.8" stroke="#111" stroke-width="1.6"/>
<path d="M1235.2 204.2L1240.5 209.4L1245.8 204.2" fill="none" stroke="#3c3c3c" stroke-width="1.7"/>
<path d="M1235.7 427.8L1240.5 432.8L1245.3 427.8" fill="none" stroke="#3c3c3c" stroke-width="1.7"/>
</svg>
</div>
<div class="bbtn" style="left:2.2px;width:53.5px">输出日志</div><div class="bbtn" style="left:57.4px;width:35.6px">Shell</div>
<div id="status"></div>
</div>
</body>
</html>
